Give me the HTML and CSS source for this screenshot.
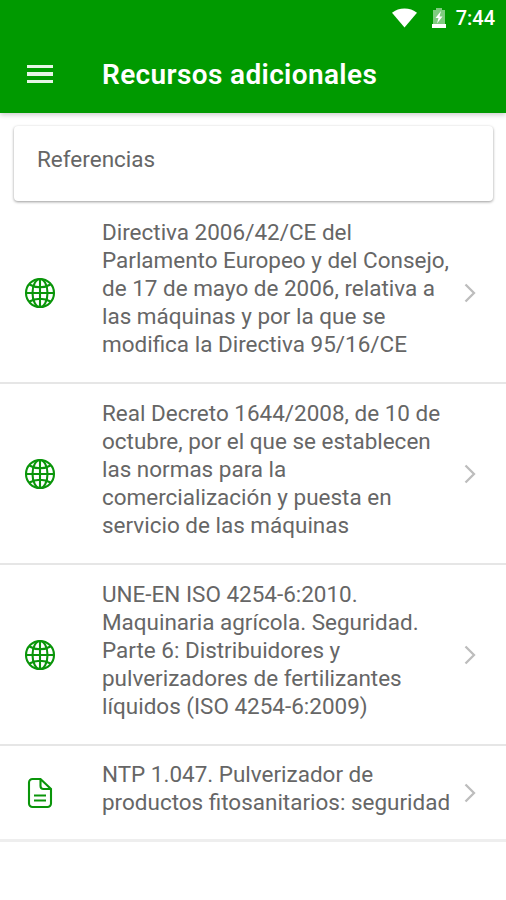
FILE: index.html
```
<!DOCTYPE html>
<html lang="es">
<head>
    <meta charset="UTF-8">
    <meta name="viewport" content="width=device-width, initial-scale=1.0">
    <title>Recursos adicionales</title>
    <link rel="stylesheet" href="styles.css">
</head>
<body>
    <svg class="symbols" width="0" height="0">
        <symbol id="globe" viewBox="0 0 32 32">
            <circle cx="16" cy="16" r="14"/>
            <ellipse cx="16" cy="16" rx="7.5" ry="14"/>
            <path d="M16 2v28M2 16h28M5.500 7.500c6 3.600 15 3.600 21 0M5.500 24.500c6-3.600 15-3.600 21 0"/>
        </symbol>
        <symbol id="doc" viewBox="0 0 32 32">
            <path d="M8.500 2h8l10.500 10v14.500a3.500 3.500 0 0 1-3.500 3.500h-15a3.500 3.500 0 0 1-3.500-3.500v-21a3.500 3.500 0 0 1 3.500-3.500zM16.500 2v7a3 3 0 0 0 3 3h7.500M10 18.500h12M10 23.500h12"/>
        </symbol>
        <symbol id="arrow" viewBox="0 0 12 20">
            <path d="M1.500 1.500l8.500 8.500-8.500 8.500"/>
        </symbol>
    </svg>

    <header class="header">
        <div class="status-bar">
            <svg class="wifi" viewBox="0 0 26 20"><path d="M0 4.500C7-1.500 19-1.500 26 4.500L13 20z"/></svg>
            <svg class="battery" viewBox="0 0 14 20">
                <path class="battery-body" d="M1 2h3v-2h6v2h3v14h-12z"/>
                <path d="M0 16h14v4h-14zM9 3L3.500 10h3l-1.500 5.500 5.500-7h-3z"/>
            </svg>
            <span class="time">7:44</span>
        </div>
        <div class="toolbar">
            <div class="menu"><span></span><span></span><span></span></div>
            <h1>Recursos adicionales</h1>
        </div>
    </header>

    <div class="card">Referencias</div>

    <div class="list">
        <div class="item">
            <svg class="icon"><use href="#globe"/></svg>
            <p>Directiva 2006/42/CE del<br>Parlamento Europeo y del Consejo,<br>de 17 de mayo de 2006, relativa a<br>las máquinas y por la que se<br>modifica la Directiva 95/16/CE</p>
            <svg class="arrow"><use href="#arrow"/></svg>
        </div>
        <div class="item">
            <svg class="icon"><use href="#globe"/></svg>
            <p>Real Decreto 1644/2008, de 10 de<br>octubre, por el que se establecen<br>las normas para la<br>comercialización y puesta en<br>servicio de las máquinas</p>
            <svg class="arrow"><use href="#arrow"/></svg>
        </div>
        <div class="item">
            <svg class="icon"><use href="#globe"/></svg>
            <p>UNE-EN ISO 4254-6:2010.<br>Maquinaria agrícola. Seguridad.<br>Parte 6: Distribuidores y<br>pulverizadores de fertilizantes<br>líquidos (ISO 4254-6:2009)</p>
            <svg class="arrow"><use href="#arrow"/></svg>
        </div>
        <div class="item">
            <svg class="icon"><use href="#doc"/></svg>
            <p>NTP 1.047. Pulverizador de<br>productos fitosanitarios: seguridad</p>
            <svg class="arrow"><use href="#arrow"/></svg>
        </div>
    </div>
</body>
</html>
```
FILE: styles.css
```
* {
    box-sizing: border-box;
}

body {
    margin: 0;
    background-color: #fff;
    font-family: Roboto, sans-serif;
    color: #666;
}

.symbols {
    display: block;
}

.header {
    height: 113px;
    background-color: #009a00;
    color: #fff;
    box-shadow: 0 2px 5px rgba(0, 0, 0, 0.2);
}

.status-bar {
    display: flex;
    justify-content: flex-end;
    align-items: center;
    height: 35px;
    padding-right: 11px;
}

.status-bar svg {
    fill: #fff;
}

.wifi {
    width: 25px;
    height: 20px;
    margin-right: 15px;
}

.battery {
    width: 14px;
    height: 20px;
    margin-right: 10px;
}

.battery .battery-body {
    fill: #7fcc7f;
}

.time {
    font-size: 20px;
    font-weight: 500;
}

.toolbar {
    display: flex;
    align-items: center;
    height: 78px;
    padding-left: 27px;
}

.menu {
    display: flex;
    flex-direction: column;
    gap: 4px;
    width: 26px;
    margin-right: 49px;
}

.menu span {
    height: 3.500px;
    background-color: #e6f5e6;
}

.toolbar h1 {
    margin: 0;
    padding-top: 1px;
    font-size: 28px;
    font-weight: 600;
    letter-spacing: 0.36px;
}

.card {
    height: 75px;
    margin: 13px 13px 0 14px;
    padding: 19px 23px;
    border-radius: 4px;
    box-shadow: 0 1px 3px rgba(0, 0, 0, 0.4);
    font-size: 22.500px;
    line-height: 28px;
}

.list {
    margin-top: 2px;
}

.item {
    display: flex;
    align-items: center;
    height: 181px;
    padding-left: 24px;
    border-bottom: 2px solid #e6e6e6;
}

.item:last-child {
    height: 96px;
    border-bottom: 3px solid #eee;
}

.icon {
    width: 32px;
    height: 32px;
    margin-right: 46px;
    fill: none;
    stroke: #0a950a;
    stroke-width: 2.1;
}

.item p {
    width: 362px;
    margin: 0;
    padding-bottom: 9px;
    font-size: 22.480px;
    line-height: 28.100px;
    white-space: nowrap;
}

.arrow {
    width: 12px;
    height: 20px;
    fill: none;
    stroke: #bdbdbd;
    stroke-width: 2.300;
}
```
